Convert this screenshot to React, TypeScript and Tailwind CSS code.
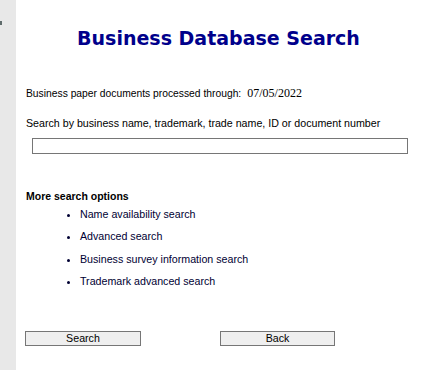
import React from "react"

const options = [
  "Name availability search",
  "Advanced search",
  "Business survey information search",
  "Trademark advanced search",
]

export default function App() {
  return (
    <div className="flex h-[370px] w-[436px] bg-white font-['Liberation_Sans',Arial,sans-serif] text-black">
      {/* side strip */}
      <div className="relative w-4 shrink-0 bg-[#e8e8e8]">
        <div className="absolute left-0 top-[21px] h-[4px] w-[2px] bg-[#5f6b6b]" />
      </div>

      <div className="flex-1 pl-[10px] pr-[25px]">
        <h1 className="pt-[27px] text-center font-['DejaVu_Sans',Verdana,sans-serif] text-[19px] font-bold leading-[23px] text-[#00008b]">
          Business Database Search
        </h1>

        <div className="mt-[37px] flex h-[13px] items-baseline text-[10.3px] leading-[13px]">
          <span>Business paper documents processed through:</span>
          <span className="ml-[6px] font-['Liberation_Serif','Times_New_Roman',serif] text-[12px] leading-[13px]">
            07/05/2022
          </span>
        </div>

        <p className="mt-[17px] text-[10.67px] leading-[13px]">
          Search by business name, trademark, trade name, ID or document number
        </p>

        <input
          type="text"
          className="mt-[8px] ml-[6px] block h-[16px] w-[376px] border border-[#767676] bg-white outline-none"
        />

        <p className="mt-[36px] text-[10.5px] font-bold leading-[13px]">More search options</p>

        <ul className="mt-[5px] list-disc pl-[54px] text-[10.67px] leading-[13px] text-[#000033]">
          {options.map((o, i) => (
            <li key={o} className={i > 0 ? "mt-[9.3px]" : ""}>
              {o}
            </li>
          ))}
        </ul>

        <div className="mt-[43px] ml-[-1px] flex">
          <button className="h-[15px] w-[116px] border border-[#767676] bg-[#efefef] text-[10.67px] leading-[13px] text-black">
            Search
          </button>
          <button className="ml-[79px] h-[15px] w-[115px] border border-[#767676] bg-[#efefef] text-[10.67px] leading-[13px] text-black">
            Back
          </button>
        </div>
      </div>
    </div>
  )
}
